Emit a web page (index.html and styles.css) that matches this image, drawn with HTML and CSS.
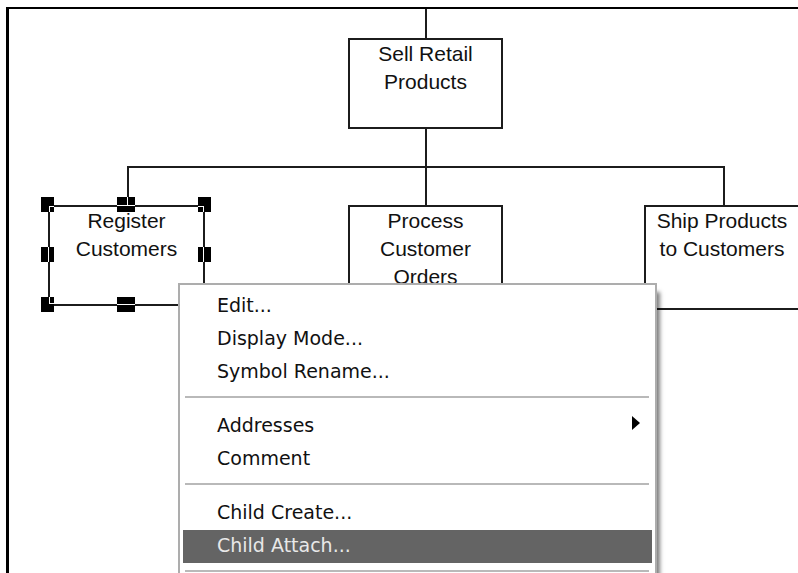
FILE: index.html
```html
<!DOCTYPE html>
<html>
<head>
<meta charset="utf-8">
<link rel="stylesheet" href="styles.css">
</head>
<body>
<div class="window">
  <div class="node node-root">Sell Retail<br>Products</div>
  <div class="node node-register">Register<br>Customers</div>
  <div class="node node-process">Process<br>Customer<br>Orders</div>
  <div class="node node-ship">Ship Products<br>to Customers</div>

  <svg class="wires" width="789" height="564" viewBox="0 0 789 564">
    <g transform="translate(-9 -9)" fill="#1c1c1c">
      <rect x="425" y="0" width="2" height="38"/>
      <rect x="425" y="129" width="2" height="39"/>
      <rect x="127" y="166" width="598" height="2"/>
      <rect x="127" y="166" width="2" height="39"/>
      <rect x="425" y="166" width="2" height="39"/>
      <rect x="723" y="166" width="2" height="39"/>
    </g>
    <g transform="translate(-9 -9)">
      <g fill="#000">
        <rect x="41" y="197" width="13" height="15"/>
        <rect x="117" y="197" width="18" height="15"/>
        <rect x="198" y="197" width="13" height="15"/>
        <rect x="41" y="247" width="13" height="15"/>
        <rect x="198" y="247" width="13" height="15"/>
        <rect x="41" y="297" width="13" height="15"/>
        <rect x="117" y="297" width="18" height="15"/>
      </g>
      <g fill="#fff">
        <rect x="49" y="206" width="5" height="1"/>
        <rect x="49" y="206" width="1" height="6"/>
        <rect x="117" y="205" width="18" height="1"/>
        <rect x="127" y="197" width="1" height="8"/>
        <rect x="198" y="206" width="5" height="1"/>
        <rect x="203" y="206" width="1" height="6"/>
        <rect x="48" y="247" width="1" height="15"/>
        <rect x="203" y="247" width="1" height="15"/>
        <rect x="49" y="297" width="1" height="7"/>
        <rect x="49" y="303" width="5" height="1"/>
        <rect x="117" y="304" width="18" height="1"/>
      </g>
    </g>
  </svg>

  <div class="menu">
    <div class="menu-item">Edit...</div>
    <div class="menu-item">Display Mode...</div>
    <div class="menu-item">Symbol Rename...</div>
    <div class="menu-sep"></div>
    <div class="menu-item has-sub"><span>Addresses</span><svg class="sub-arrow" width="8" height="14" viewBox="0 0 8 14"><path d="M0 0 L8 7 L0 14 Z" fill="#000"/></svg></div>
    <div class="menu-item">Comment</div>
    <div class="menu-sep"></div>
    <div class="menu-item">Child Create...</div>
    <div class="menu-item is-active">Child Attach...</div>
    <div class="menu-sep"></div>
  </div>
</div>
</body>
</html>
```

FILE: styles.css
```css
html, body {
  margin: 0;
  padding: 0;
  background: #fff;
}

body {
  width: 798px;
  height: 573px;
  overflow: hidden;
}

.window {
  position: relative;
  margin: 7px 0 0 6px;
  border-left: 3px solid #000;
  border-top: 2px solid #000;
  height: 564px;
  overflow: hidden;
  background: #fff;
}

.node {
  position: absolute;
  box-sizing: border-box;
  border: 2px solid #1c1c1c;
  background: #fff;
  text-align: center;
  font-family: "Liberation Sans", Arial, sans-serif;
  font-size: 21px;
  line-height: 28px;
  color: #111;
}

.node-root { left: 339px; top: 29px; width: 155px; height: 91px; }
.node-register { left: 39px; top: 196px; width: 157px; height: 101px; }
.node-process { left: 339px; top: 196px; width: 155px; height: 101px; }
.node-ship { left: 635px; top: 196px; width: 154px; height: 105px; border-right: 0; }

.wires {
  position: absolute;
  left: 0;
  top: 0;
}

.menu {
  position: absolute;
  left: 169px;
  top: 274px;
  width: 479px;
  height: 330px;
  box-sizing: border-box;
  border: 2px solid #adadad;
  background: #fff;
  padding: 5px 3px 0 3px;
  box-shadow: 5px 7px 4px -2px rgba(0, 0, 0, 0.5);
  font-family: "DejaVu Sans", Verdana, sans-serif;
  font-size: 19px;
  color: #111;
}

.menu-item {
  height: 33px;
  line-height: 30px;
  padding: 0 12px 3px 34px;
  box-sizing: border-box;
  display: flex;
  justify-content: space-between;
  white-space: nowrap;
}

.menu-item.is-active {
  background: #646464;
  color: #e8e8e8;
}

.sub-arrow {
  margin-top: 6px;
  flex: none;
}

.menu-sep {
  height: 2px;
  margin: 7px 3px 12px 2px;
  background: #b9b9b9;
}

.menu-sep:first-of-type {
  margin-top: 8px;
  margin-bottom: 11px;
}
```
